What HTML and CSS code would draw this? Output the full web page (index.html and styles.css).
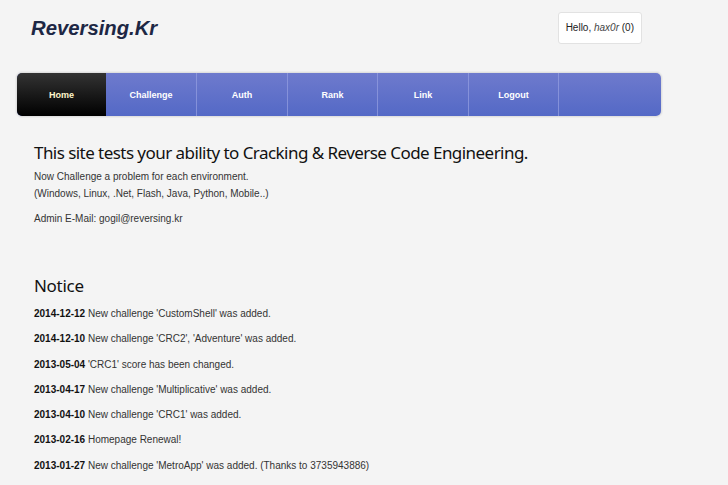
FILE: index.html
```html
<!DOCTYPE html>
<html>
<head>
<meta charset="utf-8">
<title>Reversing.Kr</title>
<link rel="stylesheet" href="styles.css">
</head>
<body>
<div class="page">
  <header class="header">
    <h1 class="logo">Reversing.Kr</h1>
    <div class="hello">Hello, <em>hax0r</em> (0)</div>
  </header>
  <nav class="nav">
    <ul class="menu">
      <li class="item active w89">Home</li>
      <li class="item w90">Challenge</li>
      <li class="item sep w91">Auth</li>
      <li class="item sep w90">Rank</li>
      <li class="item sep w91">Link</li>
      <li class="item sep w90">Logout</li>
      <li class="item sep filler"></li>
    </ul>
  </nav>
  <main class="main">
    <h2 class="title">This site tests your ability to Cracking &amp; Reverse Code Engineering.</h2>
    <p class="line">Now Challenge a problem for each environment.</p>
    <p class="line">(Windows, Linux, .Net, Flash, Java, Python, Mobile..)</p>
    <p class="line mail">Admin E-Mail: gogil@reversing.kr</p>

    <h2 class="notice-title">Notice</h2>
    <ul class="notices">
      <li><b>2014-12-12</b> New challenge 'CustomShell' was added.</li>
      <li><b>2014-12-10</b> New challenge 'CRC2', 'Adventure' was added.</li>
      <li><b>2013-05-04</b> 'CRC1' score has been changed.</li>
      <li><b>2013-04-17</b> New challenge 'Multiplicative' was added.</li>
      <li><b>2013-04-10</b> New challenge 'CRC1' was added.</li>
      <li><b>2013-02-16</b> Homepage Renewal!</li>
      <li><b>2013-01-27</b> New challenge 'MetroApp' was added. (Thanks to 3735943886)</li>
    </ul>
  </main>
</div>
</body>
</html>
```
FILE: styles.css
```css
html, body {
  margin: 0;
  padding: 0;
}
body {
  background: #f4f4f4;
  font-family: "Liberation Sans", Arial, sans-serif;
  color: #222;
}
.page {
  padding-left: 16px;
  width: 646px;
}
.header {
  display: flex;
  justify-content: space-between;
  align-items: flex-start;
  height: 72px;
}
.logo {
  margin: 16px 0 0 15px;
  font-size: 20.3px;
  line-height: 24px;
  font-style: italic;
  font-weight: bold;
  color: #1d2744;
}
.hello {
  margin: 12px 20px 0 0;
  background: #fff;
  border: 1px solid #e2e2e2;
  border-radius: 3px;
  padding: 9px 7px 9px 7px;
  font-size: 10px;
  line-height: 12px;
  color: #222;
}
.hello em {
  color: #444;
}
.nav {
  border: 1px solid #e0e0e0;
  border-radius: 6px;
  background: #ebebeb;
  box-shadow: 0 0 0 1px #ececec;
}
.menu {
  display: flex;
  margin: 0;
  padding: 0;
  list-style: none;
  height: 43px;
  border-radius: 5px;
  overflow: hidden;
  background: linear-gradient(#6e7acd, #5469c6);
}
.item {
  display: flex;
  align-items: center;
  justify-content: center;
  color: #fff;
  font-size: 9px;
  font-weight: bold;
  box-sizing: border-box;
}
.w89 { width: 89px; }
.w90 { width: 90px; }
.w91 { width: 91px; }
.filler { flex: 1; }
.sep {
  border-left: 1px solid rgba(150, 160, 225, 0.7);
}
.active {
  background: linear-gradient(#333, #000);
  color: #fff6cc;
}
.main {
  padding-left: 18px;
}
.title {
  margin: 24px 0 3px;
  font-family: "Noto Sans", sans-serif;
  font-weight: normal;
  font-size: 17px;
  letter-spacing: -0.55px;
  line-height: 24px;
  color: #111;
}
.line {
  margin: 0;
  font-size: 10px;
  line-height: 17px;
  color: #333;
}
.mail {
  margin-top: 8px;
}
.notice-title {
  margin: 47px 0 8px;
  font-family: "Noto Sans", sans-serif;
  font-weight: normal;
  font-size: 17px;
  letter-spacing: -0.3px;
  line-height: 24px;
  color: #111;
}
.notices {
  margin: 0;
  padding: 0;
  list-style: none;
}
.notices li {
  font-size: 10px;
  line-height: 15px;
  margin-bottom: 10.3px;
  color: #333;
}
.notices b {
  color: #111;
}
```
